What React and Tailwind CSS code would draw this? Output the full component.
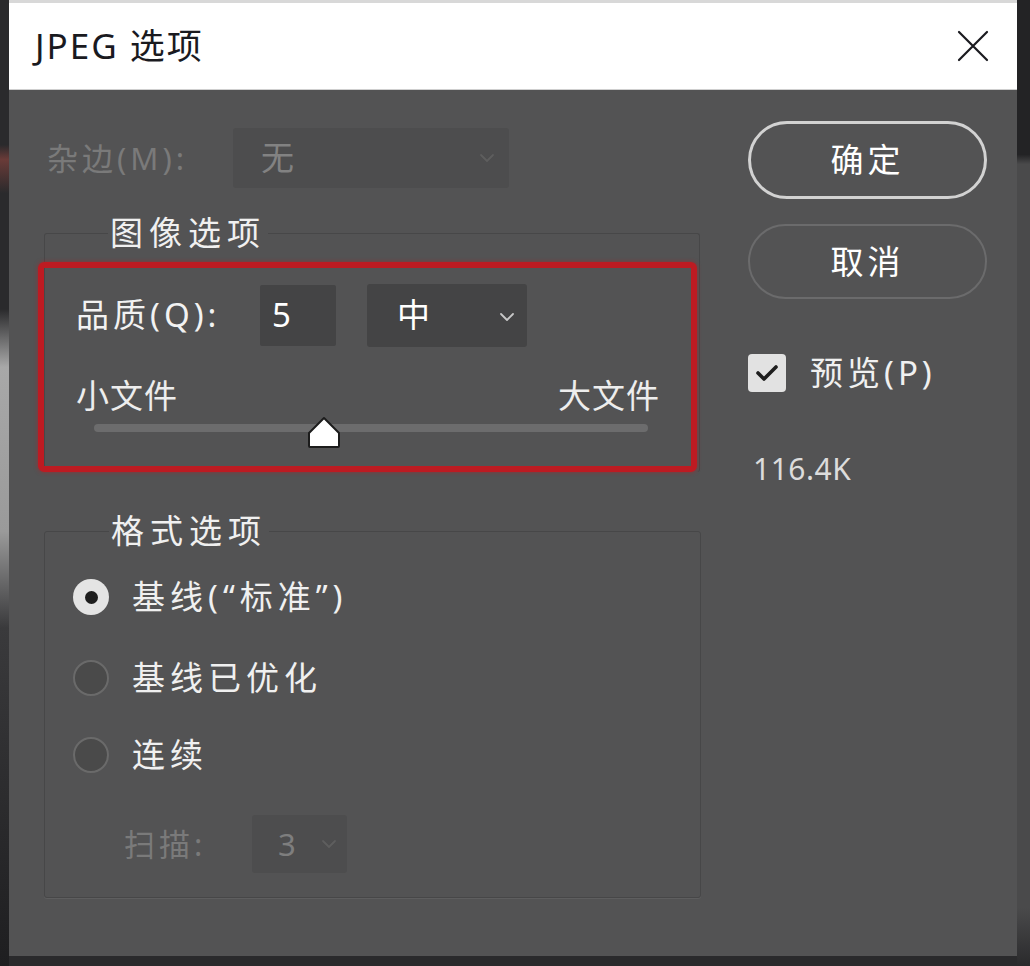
import React from 'react';

const Chevron = ({ className = '' }) => (
  <svg width="16" height="10" viewBox="0 0 16 10" className={className}>
    <path d="M2 2 L8 8 L14 2" fill="none" stroke="currentColor" strokeWidth="1.8" strokeLinecap="round" strokeLinejoin="round" />
  </svg>
);

const Radio = ({ checked, label }) => (
  <div className="flex items-center h-[40px]">
    {checked ? (
      <div className="w-[36px] h-[36px] rounded-full bg-[#e4e4e4] flex items-center justify-center">
        <div className="w-[13px] h-[13px] rounded-full bg-[#1e1e1e]" />
      </div>
    ) : (
      <div className="w-[36px] h-[36px] rounded-full bg-[#4a4a4a] border-2 border-[#6a6a6a]" />
    )}
    <span className="ml-[23px] text-[33px] leading-[40px] text-[#f0f0f0] tracking-[5px]">{label}</span>
  </div>
);

export default function App() {
  return (
    <div className="w-[1030px] h-[966px] bg-[#2a2a2c] flex font-['Noto_Sans','Noto_Sans_CJK_SC',sans-serif] overflow-hidden">
      {/* left edge of what lies behind */}
      <div className="w-[9px] h-full bg-[linear-gradient(to_bottom,#2a2a2c_0%,#2a2a2c_15%,#6a3b38_16.5%,#2a2a2c_20%,#2a2a2c_32%,#a8a8a8_38%,#9a9a9a_55%,#3a3a3c_65%,#1e1e20_100%)]" />

      <div className="w-[1008px] h-[956px] flex flex-col">
        {/* title bar */}
        <div className="h-[90px] bg-white border-t-[3px] border-[#d8d8d8] border-b border-b-[#cfcfcf] flex items-center justify-between pl-[26px] pr-[28px]">
          <span className="text-[35px] text-[#1a1a1f] tracking-[2px]">JPEG 选项</span>
          <svg width="32" height="32" viewBox="0 0 32 32">
            <path d="M2 2 L30 30 M30 2 L2 30" stroke="#1a1a1f" strokeWidth="2.2" strokeLinecap="round" />
          </svg>
        </div>

        {/* body */}
        <div className="flex-1 bg-[#535354] flex">
          {/* left column */}
          <div className="w-[712px] pl-[35px] flex flex-col">
            <div className="mt-[38px] ml-[3px] h-[60px] flex items-center">
              <span className="w-[186px] text-[31px] text-[#7a7a7a] tracking-[4px]">杂边(M):</span>
              <div className="w-[276px] h-[60px] bg-[#4d4d4e] rounded-[3px] flex items-center justify-between pl-[28px] pr-[14px]">
                <span className="text-[33px] text-[#828282]">无</span>
                <Chevron className="text-[#5e5e5e]" />
              </div>
            </div>

            {/* image options */}
            <fieldset className="mt-[25px] w-[656px] border border-b-0 border-[#474748] rounded-[3px]">
              <legend className="ml-[63px] px-[2px] text-[33px] leading-[40px] text-[#f0f0f0] tracking-[6px]">图像选项</legend>
              <div className="mt-[9px] -ml-[7px] w-[659px] h-[210px] border-[6px] border-[#bd1b22] rounded-[6px] shadow-[0_0_4px_rgba(190,27,34,0.6)] flex flex-col">
                <div className="mt-[14px] pl-[32px] flex items-center h-[66px]">
                  <span className="w-[184px] text-[33px] text-[#f2f2f2] tracking-[4px]">品质(Q):</span>
                  <div className="w-[76px] h-[61px] bg-[#444445] rounded-[2px] flex items-center pl-[12px]">
                    <span className="text-[33px] text-white">5</span>
                  </div>
                  <div className="ml-[31px] w-[160px] h-[63px] bg-[#444445] rounded-[3px] flex items-center justify-between pl-[30px] pr-[12px]">
                    <span className="text-[33px] text-white">中</span>
                    <Chevron className="text-[#c8c8c8] mt-[4px]" />
                  </div>
                </div>
                <div className="mt-[28px] pl-[32px] pr-[31px] flex justify-between text-[33px] leading-[40px] text-[#ededed] tracking-[1px]">
                  <span>小文件</span>
                  <span>大文件</span>
                </div>
                <div className="mt-[8px] ml-[50px] w-[554px] h-[8px] bg-[#6c6c6d] rounded-full relative">
                  <svg width="36" height="33" viewBox="0 0 36 33" className="absolute left-[212px] -top-[8px]">
                    <path d="M18 2 L33 17 L33 30 Q33 31 32 31 L4 31 Q3 31 3 30 L3 17 Z" fill="#ffffff" stroke="#1c1c1c" strokeWidth="2" strokeLinejoin="round" />
                  </svg>
                </div>
              </div>
            </fieldset>

            {/* format options */}
            <fieldset className="mt-[39px] w-[657px] h-[387px] border border-[#474748] rounded-[3px] shadow-[0_1px_0_#5e5e5f]">
              <legend className="ml-[64px] px-[2px] text-[33px] leading-[40px] text-[#f0f0f0] tracking-[6px]">格式选项</legend>
              <div className="pl-[28px] flex flex-col">
                <div className="mt-[26px]">
                  <Radio checked label={'基线(“标准”)'} />
                </div>
                <div className="mt-[41px]">
                  <Radio label="基线已优化" />
                </div>
                <div className="mt-[37px]">
                  <Radio label="连续" />
                </div>
                <div className="mt-[40px] ml-[51px] flex items-center h-[58px]">
                  <span className="w-[128px] text-[31px] text-[#7a7a7a] tracking-[4px]">扫描:</span>
                  <div className="w-[95px] h-[58px] bg-[#4d4d4e] rounded-[3px] flex items-center justify-between pl-[26px] pr-[10px]">
                    <span className="text-[31px] text-[#7e7e7e]">3</span>
                    <Chevron className="text-[#5e5e5e]" />
                  </div>
                </div>
              </div>
            </fieldset>
          </div>

          {/* right column */}
          <div className="flex-1 pl-[27px] flex flex-col">
            <button className="mt-[31px] w-[239px] h-[78px] rounded-full border-[3px] border-[#d2d2d2] text-[33px] text-white tracking-[4px]">确定</button>
            <button className="mt-[25px] w-[239px] h-[75px] rounded-full border-2 border-[#6b6b6c] text-[33px] text-white tracking-[4px]">取消</button>
            <div className="mt-[55px] flex items-center h-[38px]">
              <div className="w-[38px] h-[38px] rounded-[4px] bg-[#e2e2e2] flex items-center justify-center">
                <svg width="24" height="20" viewBox="0 0 24 20">
                  <path d="M3 10 L9 16 L21 4" fill="none" stroke="#1e1e1e" strokeWidth="3.6" strokeLinecap="round" strokeLinejoin="round" />
                </svg>
              </div>
              <span className="ml-[24px] text-[33px] text-[#f0f0f0] tracking-[4px]">预览(P)</span>
            </div>
            <span className="mt-[59px] ml-[5px] text-[30px] leading-[36px] text-[#dcdcdc] tracking-[0.5px]">116.4K</span>
          </div>
        </div>
      </div>

      {/* right edge of what lies behind */}
      <div className="flex-1 h-full bg-[linear-gradient(to_bottom,#232325_0%,#232325_16%,#4a4a4b_17%,#4a4a4b_94%,#2a2a2c_100%)]" />
    </div>
  );
}
